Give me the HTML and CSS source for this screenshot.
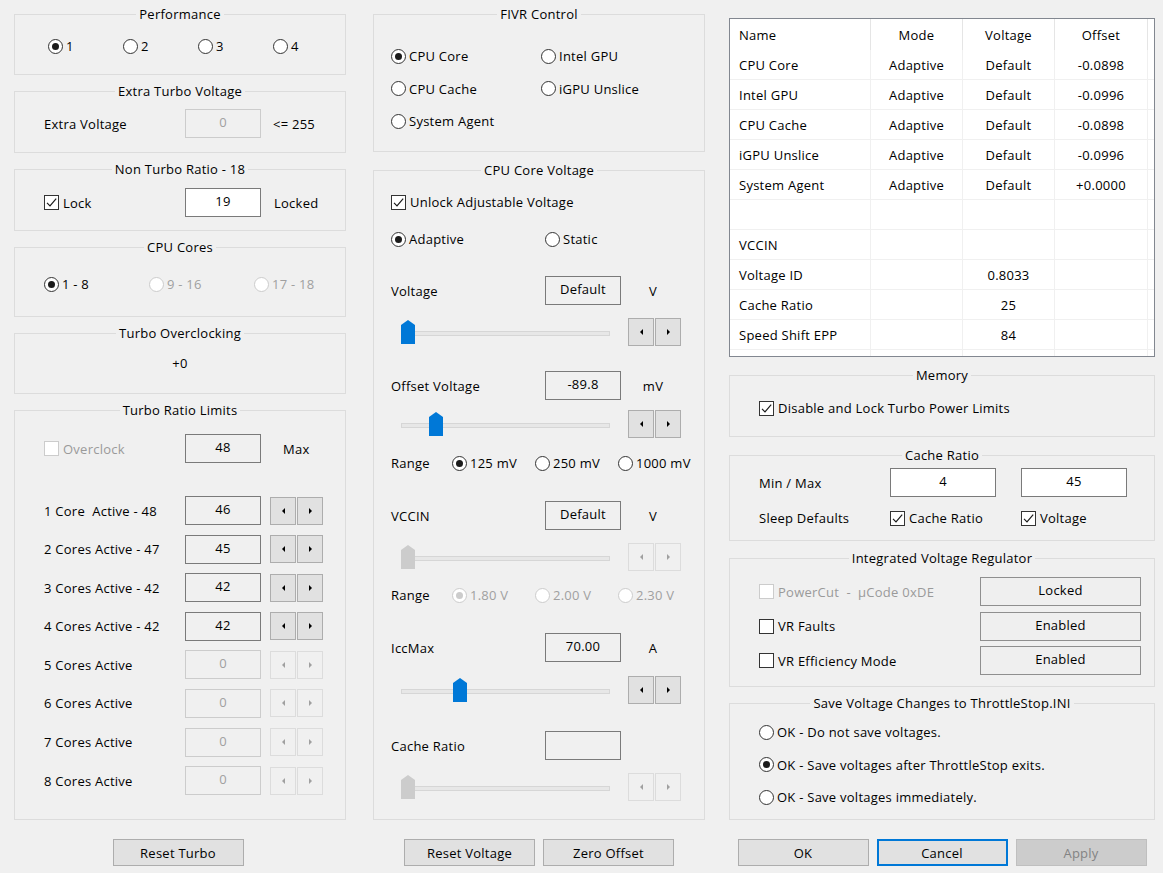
FILE: index.html
```html
<!DOCTYPE html>
<html lang="en">
<head>
<meta charset="utf-8">
<title>FIVR Control</title>
<link rel="stylesheet" href="styles.css">
</head>
<body>
<div class="dlg">

  <!-- Column 1 -->
  <div class="col c1">
    <section class="grp">
      <div class="gt"><span>Performance</span></div>
      <div class="gb gb-perf">
        <div class="g4">
          <span class="rb on"><i></i>1</span>
          <span class="rb"><i></i>2</span>
          <span class="rb"><i></i>3</span>
          <span class="rb"><i></i>4</span>
        </div>
      </div>
    </section>

    <section class="grp">
      <div class="gt"><span>Extra Turbo Voltage</span></div>
      <div class="gb gb-extra">
        <div class="erow">
          <span>Extra Voltage</span>
          <span class="ed dis">0</span>
          <span class="after12">&lt;= 255</span>
        </div>
      </div>
    </section>

    <section class="grp">
      <div class="gt"><span>Non Turbo Ratio - 18</span></div>
      <div class="gb gb-nonturbo">
        <div class="erow">
          <span class="cb on"><i><svg viewBox="0 0 13 13"><path d="M2 6.8 L5 9.8 L11.2 2.6"/></svg></i>Lock</span>
          <span class="ed white">19</span>
          <span class="after13">Locked</span>
        </div>
      </div>
    </section>

    <section class="grp">
      <div class="gt"><span>CPU Cores</span></div>
      <div class="gb gb-cores">
        <div class="g3">
          <span class="rb on"><i></i>1 - 8</span>
          <span class="rb dis"><i></i>9 - 16</span>
          <span class="rb dis"><i></i>17 - 18</span>
        </div>
      </div>
    </section>

    <section class="grp">
      <div class="gt"><span>Turbo Overclocking</span></div>
      <div class="gb gb-toc">
        <div class="center-row">+0</div>
      </div>
    </section>

    <section class="grp">
      <div class="gt"><span>Turbo Ratio Limits</span></div>
      <div class="gb gb-trl">
        <div class="erow">
          <span class="cb dis"><i></i>Overclock</span>
          <span class="ed ro">48</span>
          <span class="after22">Max</span>
        </div>
        <div class="trl-rows">
          <div class="erow">
            <span>1 Core&nbsp; Active - 48</span>
            <span class="ed ro">46</span>
            <span class="spin"><b class="l"></b><b class="r"></b></span>
          </div>
          <div class="erow">
            <span>2 Cores Active - 47</span>
            <span class="ed ro">45</span>
            <span class="spin"><b class="l"></b><b class="r"></b></span>
          </div>
          <div class="erow">
            <span>3 Cores Active - 42</span>
            <span class="ed ro">42</span>
            <span class="spin"><b class="l"></b><b class="r"></b></span>
          </div>
          <div class="erow">
            <span>4 Cores Active - 42</span>
            <span class="ed ro">42</span>
            <span class="spin"><b class="l"></b><b class="r"></b></span>
          </div>
          <div class="erow">
            <span>5 Cores Active</span>
            <span class="ed dis">0</span>
            <span class="spin dis"><b class="l"></b><b class="r"></b></span>
          </div>
          <div class="erow">
            <span>6 Cores Active</span>
            <span class="ed dis">0</span>
            <span class="spin dis"><b class="l"></b><b class="r"></b></span>
          </div>
          <div class="erow">
            <span>7 Cores Active</span>
            <span class="ed dis">0</span>
            <span class="spin dis"><b class="l"></b><b class="r"></b></span>
          </div>
          <div class="erow">
            <span>8 Cores Active</span>
            <span class="ed dis">0</span>
            <span class="spin dis"><b class="l"></b><b class="r"></b></span>
          </div>
        </div>
      </div>
    </section>

    <div class="btns btns-left">
      <span class="btn">Reset Turbo</span>
    </div>
  </div>

  <!-- Column 2 -->
  <div class="col c2">
    <section class="grp">
      <div class="gt"><span>FIVR Control</span></div>
      <div class="gb gb-fivr">
        <div class="fivr-grid">
          <span class="rb on"><i></i>CPU Core</span>
          <span class="rb"><i></i>Intel GPU</span>
          <span class="rb"><i></i>CPU Cache</span>
          <span class="rb"><i></i>iGPU Unslice</span>
          <span class="rb"><i></i>System Agent</span>
        </div>
      </div>
    </section>

    <section class="grp mt2">
      <div class="gt"><span>CPU Core Voltage</span></div>
      <div class="gb gb-ccv">
        <div class="line20">
          <span class="cb on"><i><svg viewBox="0 0 13 13"><path d="M2 6.8 L5 9.8 L11.2 2.6"/></svg></i>Unlock Adjustable Voltage</span>
        </div>
        <div class="mode-row mt17">
          <span class="rb on"><i></i>Adaptive</span>
          <span class="rb"><i></i>Static</span>
        </div>

        <div class="cvrow mt27">
          <span>Voltage</span>
          <span class="ed ro">Default</span>
          <span class="unit">V</span>
        </div>
        <div class="slrow mt13">
          <div class="sl"><span class="thumb" style="left:0px"></span></div>
          <span class="spin"><b class="l"></b><b class="r"></b></span>
        </div>

        <div class="cvrow mt25">
          <span>Offset Voltage</span>
          <span class="ed ro">-89.8</span>
          <span class="unit">mV</span>
        </div>
        <div class="slrow mt10">
          <div class="sl"><span class="thumb" style="left:28px"></span></div>
          <span class="spin"><b class="l"></b><b class="r"></b></span>
        </div>
        <div class="range-row mt15">
          <span>Range</span>
          <span class="rb on"><i></i>125 mV</span>
          <span class="rb"><i></i>250 mV</span>
          <span class="rb"><i></i>1000 mV</span>
        </div>

        <div class="cvrow mt28">
          <span>VCCIN</span>
          <span class="ed ro">Default</span>
          <span class="unit">V</span>
        </div>
        <div class="slrow mt13">
          <div class="sl dis"><span class="thumb" style="left:0px"></span></div>
          <span class="spin dis"><b class="l"></b><b class="r"></b></span>
        </div>
        <div class="range-row mt14">
          <span>Range</span>
          <span class="rb dis on"><i></i>1.80 V</span>
          <span class="rb dis"><i></i>2.00 V</span>
          <span class="rb dis"><i></i>2.30 V</span>
        </div>

        <div class="cvrow mt28">
          <span>IccMax</span>
          <span class="ed ro">70.00</span>
          <span class="unit">A</span>
        </div>
        <div class="slrow mt14">
          <div class="sl"><span class="thumb" style="left:52px"></span></div>
          <span class="spin"><b class="l"></b><b class="r"></b></span>
        </div>

        <div class="cvrow mt27">
          <span>Cache Ratio</span>
          <span class="ed ro"></span>
          <span class="unit"></span>
        </div>
        <div class="slrow mt13">
          <div class="sl dis"><span class="thumb" style="left:0px"></span></div>
          <span class="spin dis"><b class="l"></b><b class="r"></b></span>
        </div>
      </div>
    </section>

    <div class="btns">
      <span class="btn">Reset Voltage</span>
      <span class="btn">Zero Offset</span>
    </div>
  </div>

  <!-- Column 3 -->
  <div class="col c3">
    <div class="lv">
      <div class="lv-head">
        <span class="c-name">Name</span><span>Mode</span><span>Voltage</span><span>Offset</span><span></span>
      </div>
      <div class="lv-row"><span class="c-name">CPU Core</span><span>Adaptive</span><span>Default</span><span>-0.0898</span><span></span></div>
      <div class="lv-row"><span class="c-name">Intel GPU</span><span>Adaptive</span><span>Default</span><span>-0.0996</span><span></span></div>
      <div class="lv-row"><span class="c-name">CPU Cache</span><span>Adaptive</span><span>Default</span><span>-0.0898</span><span></span></div>
      <div class="lv-row"><span class="c-name">iGPU Unslice</span><span>Adaptive</span><span>Default</span><span>-0.0996</span><span></span></div>
      <div class="lv-row"><span class="c-name">System Agent</span><span>Adaptive</span><span>Default</span><span>+0.0000</span><span></span></div>
      <div class="lv-row"><span class="c-name"></span><span></span><span></span><span></span><span></span></div>
      <div class="lv-row"><span class="c-name">VCCIN</span><span></span><span></span><span></span><span></span></div>
      <div class="lv-row"><span class="c-name">Voltage ID</span><span></span><span>0.8033</span><span></span><span></span></div>
      <div class="lv-row"><span class="c-name">Cache Ratio</span><span></span><span>25</span><span></span><span></span></div>
      <div class="lv-row"><span class="c-name">Speed Shift EPP</span><span></span><span>84</span><span></span><span></span></div>
      <div class="lv-row"><span class="c-name"></span><span></span><span></span><span></span><span></span></div>
    </div>

    <section class="grp mt2">
      <div class="gt"><span>Memory</span></div>
      <div class="gb gb-mem">
        <div class="line20">
          <span class="cb on"><i><svg viewBox="0 0 13 13"><path d="M2 6.8 L5 9.8 L11.2 2.6"/></svg></i>Disable and Lock Turbo Power Limits</span>
        </div>
      </div>
    </section>

    <section class="grp mt2">
      <div class="gt"><span>Cache Ratio</span></div>
      <div class="gb gb-cache">
        <div class="cache-grid">
          <span>Min / Max</span>
          <span class="ed white">4</span>
          <span class="ed white">45</span>
          <span>Sleep Defaults</span>
          <span class="cb on"><i><svg viewBox="0 0 13 13"><path d="M2 6.8 L5 9.8 L11.2 2.6"/></svg></i>Cache Ratio</span>
          <span class="cb on"><i><svg viewBox="0 0 13 13"><path d="M2 6.8 L5 9.8 L11.2 2.6"/></svg></i>Voltage</span>
        </div>
      </div>
    </section>

    <section class="grp mt1">
      <div class="gt"><span>Integrated Voltage Regulator</span></div>
      <div class="gb gb-ivr">
        <div class="ivr-grid">
          <span class="cb dis"><i></i>PowerCut&nbsp; -&nbsp; µCode 0xDE</span>
          <span class="fbtn">Locked</span>
          <span class="cb"><i></i>VR Faults</span>
          <span class="fbtn">Enabled</span>
          <span class="cb"><i></i>VR Efficiency Mode</span>
          <span class="fbtn">Enabled</span>
        </div>
      </div>
    </section>

    <section class="grp">
      <div class="gt"><span>Save Voltage Changes to ThrottleStop.INI</span></div>
      <div class="gb gb-save">
        <div class="save-grid">
          <span class="rb"><i></i>OK - Do not save voltages.</span>
          <span class="rb on"><i></i>OK - Save voltages after ThrottleStop exits.</span>
          <span class="rb"><i></i>OK - Save voltages immediately.</span>
        </div>
      </div>
    </section>

    <div class="btns">
      <span class="btn">OK</span>
      <span class="btn focus">Cancel</span>
      <span class="btn disabled">Apply</span>
    </div>
  </div>

</div>
</body>
</html>
```

FILE: styles.css
```css
html, body {
  margin: 0;
  padding: 0;
  background: #f0f0f0;
}

body {
  font-family: "Open Sans", "Noto Sans", "DejaVu Sans", sans-serif;
  font-size: 13px;
  letter-spacing: 0.25px;
  line-height: 16px;
  color: #000;
  width: 1163px;
  height: 873px;
  overflow: hidden;
}

.dlg {
  display: flex;
  align-items: flex-start;
  padding: 6px 0 0 14px;
}

.col {
  display: flex;
  flex-direction: column;
  gap: 8px;
}
.c1 { width: 332px; }
.c2 { width: 332px; margin-left: 27px; }
.c3 { width: 426px; margin-left: 24px; }

.mt1 { margin-top: 1px; }
.mt2 { margin-top: 2px; }
.mt10 { margin-top: 10px; }
.mt13 { margin-top: 13px; }
.mt14 { margin-top: 14px; }
.mt15 { margin-top: 15px; }
.mt17 { margin-top: 17px; }
.mt25 { margin-top: 25px; }
.mt27 { margin-top: 27px; }
.mt28 { margin-top: 28px; }

/* ---------- group boxes ---------- */
.grp {
  display: flex;
  flex-direction: column;
}
.gt {
  display: flex;
  align-items: flex-end;
  height: 16px;
}
.gt::before,
.gt::after {
  content: "";
  flex: 1;
  height: 8px;
  box-sizing: border-box;
  border-top: 1px solid #dcdcdc;
}
.gt::before { border-left: 1px solid #dcdcdc; }
.gt::after { border-right: 1px solid #dcdcdc; }
.gt span {
  align-self: stretch;
  line-height: 17px;
  padding: 0 3px;
  white-space: nowrap;
}
.gb {
  box-sizing: border-box;
  border: 1px solid #dcdcdc;
  border-top: none;
}

.gb-perf { height: 53px; padding: 14px 0 0 33px; }
.gb-extra { height: 54px; padding: 10px 0 0 29px; }
.gb-nonturbo { height: 54px; padding: 11px 0 0 29px; }
.gb-cores { height: 62px; padding: 19px 0 0 29px; }
.gb-toc { height: 53px; padding-top: 12px; }
.gb-trl { height: 402px; padding: 16px 0 0 29px; }

.gb-fivr { height: 130px; padding: 24px 0 0 17px; }
.gb-ccv { height: 642px; padding: 14px 0 0 17px; }

.gb-mem { height: 54px; padding: 15px 0 0 29px; }
.gb-cache { height: 78px; padding: 5px 0 0 29px; }
.gb-ivr { height: 121px; padding: 11px 0 0 29px; }
.gb-save { height: 109px; padding: 11px 0 0 29px; }

/* ---------- radios ---------- */
.rb, .cb {
  display: inline-flex;
  align-items: center;
  gap: 3px;
  white-space: nowrap;
}
.rb i {
  width: 15px;
  height: 15px;
  box-sizing: border-box;
  border: 1px solid #333;
  border-radius: 50%;
  background: #fff;
  display: grid;
  place-items: center;
  flex: none;
}
.rb.on i::after {
  content: "";
  width: 7px;
  height: 7px;
  border-radius: 50%;
  background: #1b1b1b;
}
.rb.dis { color: #a0a0a0; }
.rb.dis i { border-color: #cccccc; }
.rb.dis.on i::after { background: #cccccc; }

/* ---------- checkboxes ---------- */
.cb { gap: 4px; }
.cb i {
  width: 15px;
  height: 15px;
  box-sizing: border-box;
  border: 1px solid #333;
  background: #fff;
  display: grid;
  place-items: center;
  flex: none;
}
.cb svg {
  width: 13px;
  height: 13px;
}
.cb svg path {
  fill: none;
  stroke: #1b1b1b;
  stroke-width: 1.2;
}
.cb.dis { color: #9a9a9a; }
.cb.dis i { border-color: #cccccc; }

/* ---------- edits ---------- */
.ed {
  box-sizing: border-box;
  height: 29px;
  width: 76px;
  border: 1px solid #7a7a7a;
  background: #f0f0f0;
  display: flex;
  align-items: center;
  justify-content: center;
  padding-bottom: 3px;
}
.ed.white { background: #fff; }
.ed.dis {
  border-color: #cccccc;
  color: #a0a0a0;
}

/* ---------- rows ---------- */
.g4 {
  display: grid;
  grid-template-columns: repeat(4, 75px);
  height: 20px;
  align-items: center;
}
.g3 {
  display: grid;
  grid-template-columns: repeat(3, 105px);
  height: 20px;
  align-items: center;
}
.erow {
  display: grid;
  grid-template-columns: 141px 76px auto;
  align-items: center;
  height: 29px;
}
.after12 { margin-left: 12px; }
.after13 { margin-left: 13px; }
.after22 { margin-left: 22px; }
.erow .spin { margin-left: 9px; }

.center-row {
  height: 20px;
  line-height: 20px;
  text-align: center;
}

.trl-rows {
  margin-top: 33px;
  display: flex;
  flex-direction: column;
  gap: 9.6px;
}

/* ---------- spin buttons ---------- */
.spin {
  display: inline-flex;
  gap: 1px;
  height: 28px;
  width: 53px;
}
.spin b {
  flex: 1;
  box-sizing: border-box;
  border: 1px solid #adadad;
  background: #e1e1e1;
  display: grid;
  place-items: center;
}
.spin b::before {
  content: "";
  width: 0;
  height: 0;
  border-top: 3px solid transparent;
  border-bottom: 3px solid transparent;
}
.spin b.l::before { border-right: 3px solid #000; }
.spin b.r::before { border-left: 3px solid #000; }
.spin.dis b {
  background: #f0f0f0;
  border-color: #dcdcdc;
}
.spin.dis b.l::before { border-right-color: #a0a0a0; }
.spin.dis b.r::before { border-left-color: #a0a0a0; }

/* ---------- CPU core voltage ---------- */
.line20 {
  height: 20px;
  display: flex;
  align-items: center;
}
.mode-row {
  display: grid;
  grid-template-columns: 154px auto;
  height: 20px;
  align-items: center;
}
.fivr-grid {
  display: grid;
  grid-template-columns: 150px 150px;
  grid-auto-rows: 20px;
  row-gap: 12.5px;
  align-items: center;
}
.cvrow {
  display: grid;
  grid-template-columns: 154px 76px 64px;
  height: 29px;
  align-items: center;
}
.unit { text-align: center; }
.slrow {
  display: flex;
  align-items: center;
  height: 28px;
  padding-left: 10px;
}
.sl {
  position: relative;
  width: 209px;
  height: 24px;
  margin-right: 18px;
}
.sl::before {
  content: "";
  position: absolute;
  left: 0;
  right: 0;
  top: 11px;
  height: 5px;
  box-sizing: border-box;
  background: #e7e7e7;
  border: 1px solid #d6d6d6;
}
.thumb {
  position: absolute;
  top: 0;
  width: 14px;
  height: 24px;
  background: #0078d7;
  clip-path: polygon(50% 0, 100% 5px, 100% 100%, 0 100%, 0 5px);
}
.sl.dis .thumb { background: #cccccc; }

.range-row {
  display: grid;
  grid-template-columns: 61px 83px 83px 83px;
  height: 20px;
  align-items: center;
}

/* ---------- list view ---------- */
.lv {
  margin-top: 12px;
  height: 339px;
  box-sizing: border-box;
  border: 1px solid #828790;
  background: #fff;
  overflow: hidden;
}
.lv-head,
.lv-row {
  display: grid;
  grid-template-columns: 141px 92px 92px 93px 1fr;
}
.lv-head { height: 31px; }
.lv-row { height: 30px; }
.lv-head span,
.lv-row span {
  box-sizing: border-box;
  display: flex;
  align-items: center;
  justify-content: center;
  white-space: nowrap;
}
.lv-head span {
  border-right: 1px solid #e5e5e5;
  padding-top: 1px;
}
.lv-row span {
  border-right: 1px solid #f0f0f0;
  border-bottom: 1px solid #f0f0f0;
  padding-top: 1px;
}
.lv-head span:last-child,
.lv-row span:last-child { border-right: none; }
.lv .c-name {
  justify-content: flex-start;
  padding-left: 9px;
}

/* ---------- right column groups ---------- */
.cache-grid {
  display: grid;
  grid-template-columns: 131px 131px 106px;
  grid-template-rows: 29px 20px;
  row-gap: 11px;
  align-items: center;
}
.cache-grid .ed { width: 106px; }

.ivr-grid {
  display: grid;
  grid-template-columns: 221px 161px;
  grid-auto-rows: 29px;
  row-gap: 5.5px;
  align-items: center;
}
.fbtn {
  box-sizing: border-box;
  height: 29px;
  border: 1px solid #8f8f8f;
  background: #efefef;
  display: flex;
  align-items: center;
  justify-content: center;
  padding-bottom: 3px;
}

.save-grid {
  display: grid;
  grid-auto-rows: 20px;
  row-gap: 12.5px;
  align-items: center;
}

/* ---------- push buttons ---------- */
.btns {
  display: flex;
  justify-content: center;
  gap: 8px;
  margin-top: 11px;
}
.btns-left { padding-right: 4px; }
.btn {
  box-sizing: border-box;
  width: 131px;
  height: 27px;
  border: 1px solid #adadad;
  background: #e1e1e1;
  display: flex;
  align-items: center;
  justify-content: center;
}
.btn.focus {
  border: 2px solid #0078d7;
}
.btn.disabled {
  background: #cccccc;
  border-color: #bfbfbf;
  color: #838383;
}
```
